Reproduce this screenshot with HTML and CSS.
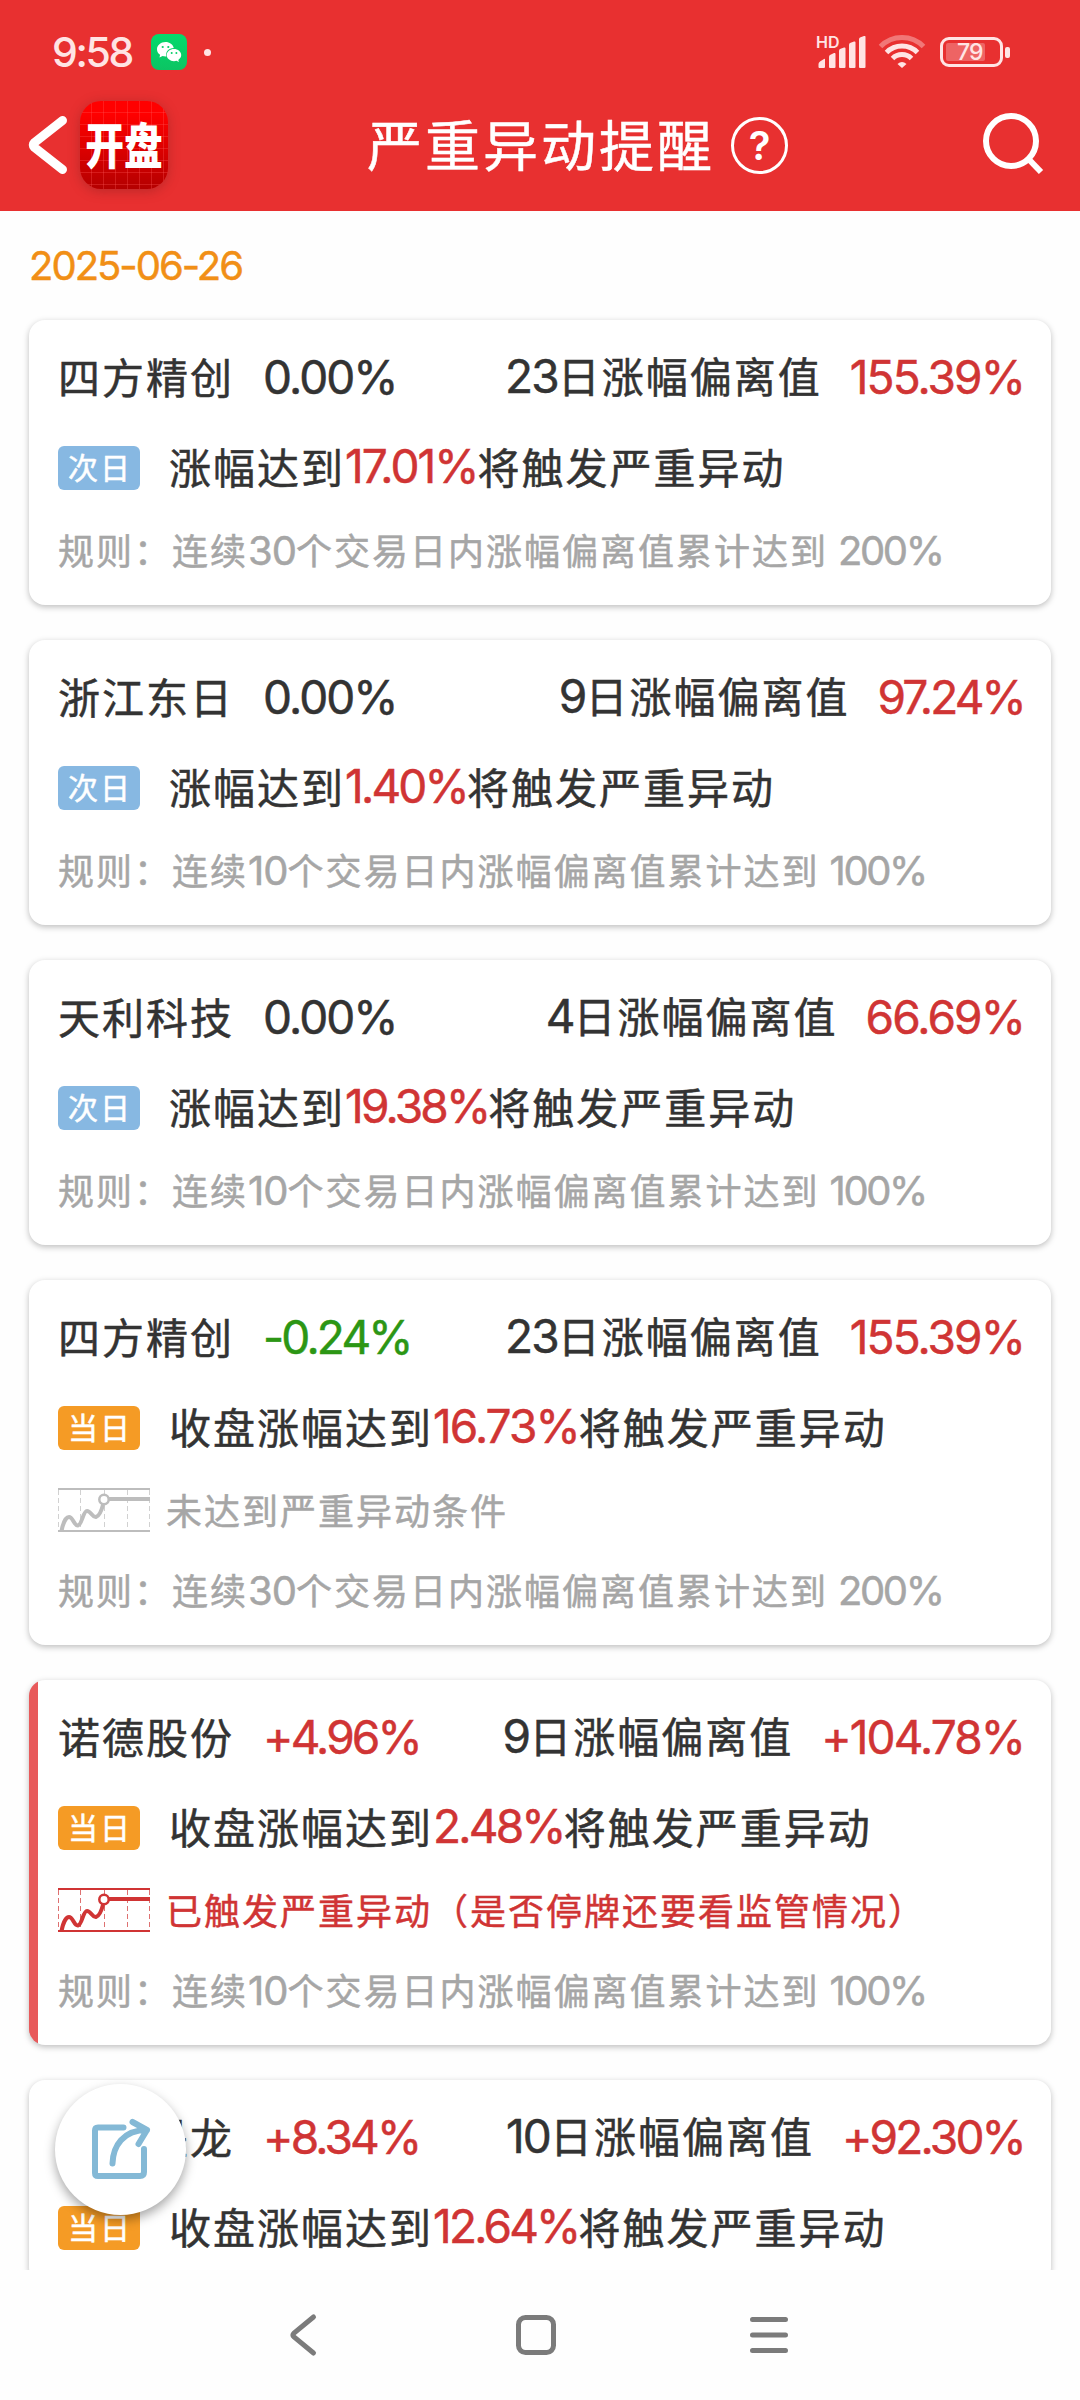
FILE: index.html
```html
<!DOCTYPE html>
<html lang="zh-CN">
<head>
    <meta charset="UTF-8">
    <meta name="viewport" content="width=device-width, initial-scale=1.0">
    <title>严重异动提醒</title>
    <link rel="stylesheet" href="styles.css">
</head>
<body>
    <!-- shared chart icon -->
    <svg class="defs" width="0" height="0">
        <symbol id="trend" viewBox="0 0 92 44">
            <path d="M.5 2v40M22.5 2v40M46.5 2v40M69.5 2v40M91.5 2v40" fill="none" stroke="currentColor" stroke-width="1" stroke-dasharray="5 3" opacity=".7"/>
            <path d="M0 1h92M0 43h92" stroke="currentColor" stroke-width="2"/>
            <path d="M3.500 43C5 35 8 29 11 29C15 29 16 38 20 37.500C24 37 25 23 29 23C33 23 34 29.500 38 29C42 28 44 21 45.500 15" fill="none" stroke="currentColor" stroke-width="4"/>
            <path d="M51 11h41" stroke="currentColor" stroke-width="4"/>
            <circle cx="46" cy="11.500" r="4.700" fill="#fff" stroke="currentColor" stroke-width="2.500"/>
        </symbol>
    </svg>

    <header class="header">
        <div class="status">
            <span class="time">9:58</span>
            <svg class="wechat" viewBox="0 0 36 36">
                <defs>
                    <linearGradient id="wx" x1="0" y1="0" x2="0" y2="1">
                        <stop offset="0" stop-color="#04da6c"/>
                        <stop offset="1" stop-color="#0cc463"/>
                    </linearGradient>
                </defs>
                <rect width="36" height="36" rx="8" fill="url(#wx)"/>
                <path d="M14.500 8C9.700 8 6 11.300 6 15.300c0 2.300 1.200 4.200 3.100 5.500L8.500 23.500l3-1.500c1 .3 2 .4 3 .4.300 0 .600 0 .900 0-1.300-4.600 2.300-8.500 7.400-8.500C22 10.500 18.600 8 14.500 8z" fill="#fff"/>
                <path d="M23 15c-4 0-7.300 2.700-7.300 6.100s3.300 6.100 7.300 6.100c.900 0 1.700-.1 2.500-.4l2.400 1.300-.600-2.200c1.800-1.100 2.900-2.800 2.900-4.800C30.200 17.700 27 15 23 15z" fill="#fff"/>
                <circle cx="11.700" cy="13" r="1.100" fill="#08cf68"/>
                <circle cx="17.300" cy="13" r="1.100" fill="#08cf68"/>
                <circle cx="20.700" cy="19" r="1" fill="#08cf68"/>
                <circle cx="25.400" cy="19" r="1" fill="#08cf68"/>
            </svg>
            <span class="dot"></span>
            <div class="status-right">
                <span class="hd">HD</span>
                <svg class="signal" width="48" height="32" viewBox="0 0 48 32">
                    <path d="M.5 31v-3q0-1.500 1.500-2.500l4-2.500q1-.5 1 .5v7.500q0 1-1 1H1.500q-1 0-1-1zM11 31V21q0-1.500 1-2l4-2q1.500-.5 1.500 1v13q0 1-1 1H12q-1 0-1-1zM21 31V15q0-1.500 1-2l4-1.500q1.500-.5 1.500 1V31q0 1-1 1H22q-1 0-1-1zM31 31V9q0-1.500 1-2l4-1.500q1.500-.5 1.500 1V31q0 1-1 1H32q-1 0-1-1zM41 31V3.500q0-1.500 1-2l4-1.500q1.500-.5 1.500 1V31q0 1-1 1H42q-1 0-1-1z"/>
                </svg>
                <svg class="wifi" width="48" height="36" viewBox="0 0 48 36">
                    <path d="M2.500 12.500a30 30 0 0 1 43 0" opacity=".4"/>
                    <path d="M8.500 18.500a22 22 0 0 1 31 0"/>
                    <path d="M14.500 24.500a13.500 13.500 0 0 1 19 0"/>
                    <path d="M24 34l-4.500-4q4.500-4 9 0z" class="wifi-dot"/>
                </svg>
                <div class="battery">
                    <span class="level">79</span>
                </div>
            </div>
        </div>
        <div class="navbar">
            <svg class="back" width="42" height="62" viewBox="0 0 42 62">
                <path d="M35.500 6.500L7.500 28.500Q5 31 7.500 33.500L35.500 55.500"/>
            </svg>
            <div class="app-icon"><span>开盘</span></div>
            <h1 class="title">严重异动提醒</h1>
            <span class="help">?</span>
            <svg class="search" width="64" height="64" viewBox="0 0 64 64">
                <circle cx="30" cy="28" r="25"/>
                <path d="M47.500 46L60 59"/>
            </svg>
        </div>
    </header>

    <main class="list">
        <div class="date num">2025-06-26</div>

        <section class="card">
            <div class="row head">
                <span class="name">四方精创</span><span class="num">0.00%</span>
                <span class="label"><span class="num">23</span>日涨幅偏离值</span><span class="num up">155.39%</span>
            </div>
            <div class="row">
                <span class="tag next">次日</span>涨幅达到<span class="num up">17.01%</span>将触发严重异动
            </div>
            <div class="row rule">规则：连续<span class="num">30</span>个交易日内涨幅偏离值累计达到<span class="num total">200%</span></div>
        </section>

        <section class="card">
            <div class="row head">
                <span class="name">浙江东日</span><span class="num">0.00%</span>
                <span class="label"><span class="num">9</span>日涨幅偏离值</span><span class="num tight up">97.24%</span>
            </div>
            <div class="row">
                <span class="tag next">次日</span>涨幅达到<span class="num tight up">1.40%</span>将触发严重异动
            </div>
            <div class="row rule">规则：连续<span class="num">10</span>个交易日内涨幅偏离值累计达到<span class="num total">100%</span></div>
        </section>

        <section class="card">
            <div class="row head">
                <span class="name">天利科技</span><span class="num">0.00%</span>
                <span class="label"><span class="num">4</span>日涨幅偏离值</span><span class="num up">66.69%</span>
            </div>
            <div class="row">
                <span class="tag next">次日</span>涨幅达到<span class="num tight up">19.38%</span>将触发严重异动
            </div>
            <div class="row rule">规则：连续<span class="num">10</span>个交易日内涨幅偏离值累计达到<span class="num total">100%</span></div>
        </section>

        <section class="card">
            <div class="row head">
                <span class="name">四方精创</span><span class="num tight down">-0.24%</span>
                <span class="label"><span class="num">23</span>日涨幅偏离值</span><span class="num up">155.39%</span>
            </div>
            <div class="row">
                <span class="tag today">当日</span>收盘涨幅达到<span class="num up">16.73%</span>将触发严重异动
            </div>
            <div class="row state">
                <svg class="trend" width="92" height="44"><use href="#trend"/></svg>未达到严重异动条件
            </div>
            <div class="row rule">规则：连续<span class="num">30</span>个交易日内涨幅偏离值累计达到<span class="num total">200%</span></div>
        </section>

        <section class="card triggered">
            <div class="row head">
                <span class="name">诺德股份</span><span class="num tight up">+4.96%</span>
                <span class="label"><span class="num">9</span>日涨幅偏离值</span><span class="num up">+104.78%</span>
            </div>
            <div class="row">
                <span class="tag today">当日</span>收盘涨幅达到<span class="num tight up">2.48%</span>将触发严重异动
            </div>
            <div class="row state up">
                <svg class="trend" width="92" height="44"><use href="#trend"/></svg>已触发严重异动（是否停牌还要看监管情况）
            </div>
            <div class="row rule">规则：连续<span class="num">10</span>个交易日内涨幅偏离值累计达到<span class="num total">100%</span></div>
        </section>

        <section class="card">
            <div class="row head">
                <span class="name">山东墨龙</span><span class="num tight up">+8.34%</span>
                <span class="label"><span class="num">10</span>日涨幅偏离值</span><span class="num tight up">+92.30%</span>
            </div>
            <div class="row">
                <span class="tag today">当日</span>收盘涨幅达到<span class="num tight up">12.64%</span>将触发严重异动
            </div>
        </section>
    </main>

    <button class="share">
        <svg width="64" height="64" viewBox="0 0 64 64">
            <path d="M36.500 9.500H11Q8 9.500 8 12.500V55Q8 58 11 58H53Q57 58 57 54V31"/>
            <path d="M25.500 45.500C26 28 36 12 60 12M45.500 4L60 12L51.500 26"/>
        </svg>
    </button>

    <footer class="sysnav">
        <svg width="40" height="44" viewBox="0 0 40 44">
            <path d="M28.500 4L9 20Q7 22 9 24L28.500 40"/>
        </svg>
        <svg width="44" height="44" viewBox="0 0 44 44">
            <rect x="4.500" y="4.500" width="35" height="35" rx="7"/>
        </svg>
        <svg width="44" height="44" viewBox="0 0 44 44">
            <path d="M5.500 6.500H38.500M5.500 22H38.500M5.500 37.500H38.500"/>
        </svg>
    </footer>
</body>
</html>
```
FILE: styles.css
```css
:root {
    --red: #e83030;
    --up: #d03434;
    --down: #2c9614;
    --text: #333;
    --muted: #a6a6a6;
    --orange: #f18f16;
}

* {
    box-sizing: border-box;
}

html, body {
    height: 2400px;
    margin: 0;
    padding: 0;
}

body {
    display: flex;
    flex-direction: column;
    position: relative;
    overflow: hidden;
    background-color: #fefefe;
    color: var(--text);
    font-family: "Noto Sans CJK SC", sans-serif;
}

svg {
    display: block;
    flex: none;
}

.defs {
    position: absolute;
}

.num {
    font-family: Inter, "Noto Sans CJK SC", sans-serif;
}

/* header */
.header {
    flex: none;
    height: 211px;
    background-color: var(--red);
    color: #fff;
}

.status {
    display: flex;
    align-items: center;
    height: 104px;
    padding: 0 71px 0 52px;
    color: #ffe4e4;
    font-family: Inter, sans-serif;
}

.time {
    width: 99px;
    font-size: 41px;
    font-weight: 500;
    letter-spacing: -2.4px;
}

.wechat {
    width: 36px;
    height: 36px;
}

.dot {
    width: 7px;
    height: 7px;
    margin-left: 17px;
    border-radius: 50%;
    background-color: #ffe4e4;
}

.status-right {
    display: flex;
    align-items: center;
    margin-left: auto;
}

.hd {
    width: 2px;
    margin-top: -20px;
    font-size: 16px;
    font-weight: 600;
}

.signal {
    fill: #ffe4e4;
}

.wifi {
    margin-left: 12px;
    fill: none;
    stroke: #ffe4e4;
    stroke-width: 5;
}

.wifi .wifi-dot {
    fill: #ffe4e4;
    stroke: none;
}

.battery {
    position: relative;
    width: 63px;
    height: 30px;
    margin-left: 14px;
    margin-right: 6px;
    padding: 3px;
    border: 3px solid #ffe4e4;
    border-radius: 9px;
}

.battery::after {
    content: "";
    position: absolute;
    top: 7px;
    right: -10px;
    width: 5px;
    height: 11px;
    border-radius: 2px;
    background-color: #ffe4e4;
}

.level {
    display: block;
    width: 39px;
    height: 18px;
    padding-left: 11px;
    border-radius: 2px;
    background-color: rgba(255, 255, 255, 0.25);
    font-size: 23px;
    font-weight: 500;
    line-height: 18px;
    letter-spacing: -1px;
}

.navbar {
    display: flex;
    align-items: center;
    height: 82px;
    padding: 0 35px 0 27px;
}

.back {
    fill: none;
    stroke: #fff;
    stroke-width: 9;
    stroke-linecap: round;
}

.app-icon {
    display: flex;
    align-items: center;
    justify-content: center;
    width: 88px;
    height: 88px;
    margin-left: 11px;
    border-radius: 21px;
    background:
        repeating-linear-gradient(90deg, transparent 0 11px, rgba(255, 90, 90, 0.3) 11px 12px),
        repeating-linear-gradient(transparent 0 11px, rgba(255, 90, 90, 0.3) 11px 12px),
        linear-gradient(#ff0000 15%, #b40000);
    box-shadow: 0 2px 12px rgba(120, 30, 30, 0.4);
}

.app-icon span {
    font-size: 49px;
    font-weight: 900;
    line-height: 88px;
    padding-bottom: 4px;
    white-space: nowrap;
    transform: scaleX(0.79);
}

.title {
    margin: 0 0 0 199px;
    padding-bottom: 7px;
    font-size: 55px;
    font-weight: 400;
    line-height: 80px;
    letter-spacing: 3px;
    -webkit-text-stroke: 0.5px;
}

.help {
    width: 57px;
    height: 57px;
    margin-left: 16px;
    border: 3px solid #fff;
    border-radius: 50%;
    font-family: Inter, sans-serif;
    font-size: 40px;
    font-weight: 600;
    line-height: 51px;
    text-align: center;
}

.search {
    margin-left: auto;
    fill: none;
    stroke: #fff;
    stroke-width: 6;
}

/* list */
.list {
    flex: none;
    height: 2059px;
    padding: 0 29px;
    overflow: hidden;
}

.date {
    height: 109px;
    color: var(--orange);
    font-size: 40px;
    line-height: 110px;
    letter-spacing: -2px;
    -webkit-text-stroke: 0.5px;
}

.card {
    margin-bottom: 35px;
    padding: 28px 29px 25px;
    border-radius: 16px;
    background-color: #fff;
    box-shadow: 0 2px 6px rgba(0, 0, 0, 0.26);
}

.row {
    display: flex;
    align-items: center;
    height: 60px;
    padding-bottom: 5px;
    font-size: 42px;
    line-height: 55px;
    letter-spacing: 2px;
    white-space: nowrap;
    -webkit-text-stroke: 0.5px;
}

.row .num {
    padding-top: 2px;
    font-size: 46px;
    letter-spacing: -1.9px;
}

.row .tight {
    letter-spacing: -2.8px;
}

.row + .row {
    margin-top: 30px;
}

.head {
    margin-right: -2px;
}

.head .num {
    padding-top: 4px;
}

.label .num {
    padding-top: 2px;
}

.name {
    width: 205px;
}

.label {
    display: flex;
    margin-left: auto;
    margin-right: 28px;
}

.row .up {
    color: var(--up);
}

.down {
    color: var(--down);
}

.tag {
    width: 82px;
    height: 44px;
    margin-top: 5px;
    margin-right: 29px;
    padding-left: 2px;
    border-radius: 6px;
    color: #fff;
    font-size: 30px;
    line-height: 41px;
    text-align: center;
}

.next {
    background-color: #87b8e2;
}

.today {
    background-color: #f59b25;
}

.row.state,
.row.rule {
    margin-top: 22px;
    padding-bottom: 2px;
    color: var(--muted);
    font-size: 36px;
}

.row.state.up {
    color: var(--up);
}

.row.state + .rule {
    margin-top: 20px;
}

.rule .num {
    font-size: 40px;
    letter-spacing: -1px;
}

.rule .total {
    margin-left: 10px;
    letter-spacing: -2.4px;
}

.trend {
    margin-top: 2px;
    margin-right: 16px;
    color: #bdbdbd;
}

.up .trend {
    color: var(--up);
}

.triggered {
    background-image: linear-gradient(90deg, #e85a5b 9px, transparent 9px);
}

/* floating share button */
.share {
    position: absolute;
    left: 55px;
    top: 2084px;
    display: flex;
    align-items: center;
    justify-content: center;
    width: 131px;
    height: 131px;
    padding: 0 3px 0 0;
    border: none;
    border-radius: 50%;
    background-color: #fff;
    box-shadow: 0 5px 11px rgba(0, 0, 0, 0.35);
}

.share svg {
    fill: none;
    stroke: #84b9d6;
    stroke-width: 6;
    stroke-linecap: round;
    stroke-linejoin: round;
}

/* system navigation */
.sysnav {
    display: flex;
    flex: none;
    align-items: center;
    justify-content: space-between;
    height: 130px;
    padding: 0 289px 0 285px;
}

.sysnav svg {
    fill: none;
    stroke: #7b7b7b;
    stroke-width: 5;
    stroke-linecap: round;
}
```
